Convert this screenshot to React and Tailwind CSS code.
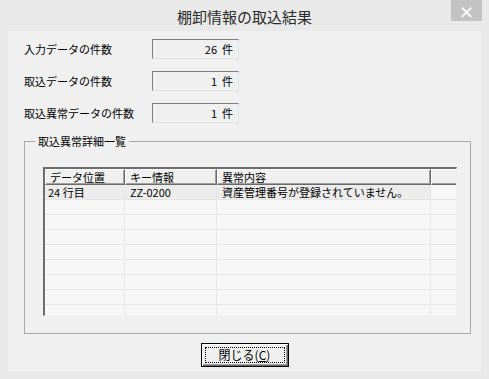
import React from "react";

const font = { fontFamily: '"Noto Sans CJK JP", "Noto Sans", sans-serif' };

const counts = [
  { label: "入力データの件数", value: "26 件" },
  { label: "取込データの件数", value: "1 件" },
  { label: "取込異常データの件数", value: "1 件" },
];

const columns = [
  { title: "データ位置", width: "w-[80px]" },
  { title: "キー情報", width: "w-[92px]" },
  { title: "異常内容", width: "w-[214px]" },
];

const rows = [["24 行目", "ZZ-0200", "資産管理番号が登録されていません。"]];

const App = () => {
  const emptyRows = Array.from({ length: 9 });

  return (
    <div
      className="w-[489px] h-[379px] bg-[#e9e9e9] flex flex-col text-[#000]"
      style={font}
    >
      {/* Title bar */}
      <div className="h-[31px] grid grid-cols-[1fr_auto_1fr] items-start">
        <div />
        <div className="pt-[7px] text-[15px] leading-[20px] text-[#2b2b2b]">
          棚卸情報の取込結果
        </div>
        <div className="flex justify-end pr-[7px]">
          <div className="w-[31px] h-[21px] bg-[#c3c3c3] flex items-center justify-center text-white text-[16px] font-bold leading-none">
            ×
          </div>
        </div>
      </div>

      {/* Client area */}
      <div className="ml-[8px] w-[473px] h-[340px] bg-[#f0f0f0] flex flex-col">
        <div className="flex flex-col gap-[12px] pt-[8px] px-[16px]">
          {counts.map((c) => (
            <div key={c.label} className="flex items-center h-[20px]">
              <div className="w-[128px] text-[11px] leading-[14px]">
                {c.label}
              </div>
              <div className="w-[87px] h-[20px] border border-t-[#7f7f7f] border-l-[#7f7f7f] border-b-[#e3e3e3] border-r-[#e3e3e3] flex items-center justify-end pr-[5px] text-[11px] leading-[14px] whitespace-pre">
                {c.value.replace(" ", "  ")}
              </div>
            </div>
          ))}
        </div>

        {/* Group box */}
        <div className="relative mt-[18px] ml-[16px] w-[447px] h-[193px] border border-[#a8a8a8] pt-[25px] pl-[18px]">
          <span className="absolute -top-[8px] left-[10px] px-[3px] bg-[#f0f0f0] text-[11px] leading-[14px]">
            取込異常詳細一覧
          </span>

          <div className="w-[414px] h-[149px] border-l-2 border-t-2 border-l-[#6d6d6d] border-t-[#6d6d6d] border-r border-b border-r-[#f0f0f0] border-b-[#f0f0f0] bg-[#f7f7f7] overflow-hidden flex flex-col">
            {/* Header */}
            <div className="flex h-[16px] shrink-0 bg-[#f0f0f0] text-[11px] leading-[14px]">
              {columns.map((col) => (
                <div
                  key={col.title}
                  className={`${col.width} shrink-0 h-full border-r border-b border-r-[#696969] border-b-[#696969] border-t border-l border-t-white border-l-white shadow-[inset_-1px_-1px_0_#a0a0a0] pl-[4px]`}
                >
                  {col.title}
                </div>
              ))}
              <div className="flex-1 h-full border-b border-b-[#696969] border-t border-l border-t-white border-l-white shadow-[inset_0_-1px_0_#a0a0a0]" />
            </div>

            {/* Body */}
            {rows.map((r) => (
              <div key={r[0]} className="flex h-[15px] shrink-0 text-[11px] leading-[14px]">
                <div className="w-[80px] shrink-0 bg-[#ececec] border-r border-b border-[#e4e4e4] pl-[3px]">
                  {r[0]}
                </div>
                <div className="w-[92px] shrink-0 bg-[#ececec] border-r border-b border-[#e4e4e4] pl-[5px]">
                  {r[1]}
                </div>
                <div className="w-[214px] shrink-0 bg-[#ececec] border-r border-b border-[#e4e4e4] pl-[5px]">
                  {r[2]}
                </div>
                <div className="flex-1 border-b border-[#e4e4e4]" />
              </div>
            ))}
            {emptyRows.map((_, i) => (
              <div key={i} className="flex h-[15px] shrink-0">
                <div className="w-[80px] shrink-0 border-r border-b border-[#e8e8e8]" />
                <div className="w-[92px] shrink-0 border-r border-b border-[#e8e8e8]" />
                <div className="w-[214px] shrink-0 border-r border-b border-[#e8e8e8]" />
                <div className="flex-1 border-b border-[#e8e8e8]" />
              </div>
            ))}
          </div>
        </div>

        {/* Close button */}
        <div className="flex justify-center mt-[9px]">
          <button className="w-[88px] h-[24px] border border-black bg-[#f0f0f0] shadow-[inset_1px_1px_0_#ffffff,inset_-1px_-1px_0_#696969,inset_-2px_-2px_0_#a0a0a0] p-[3px]">
            <div className="w-full h-full border border-dotted border-black flex items-center justify-center text-[12px] leading-[14px]">
              閉じる(<span className="underline">C</span>)
            </div>
          </button>
        </div>
      </div>
    </div>
  );
};

export default App;
